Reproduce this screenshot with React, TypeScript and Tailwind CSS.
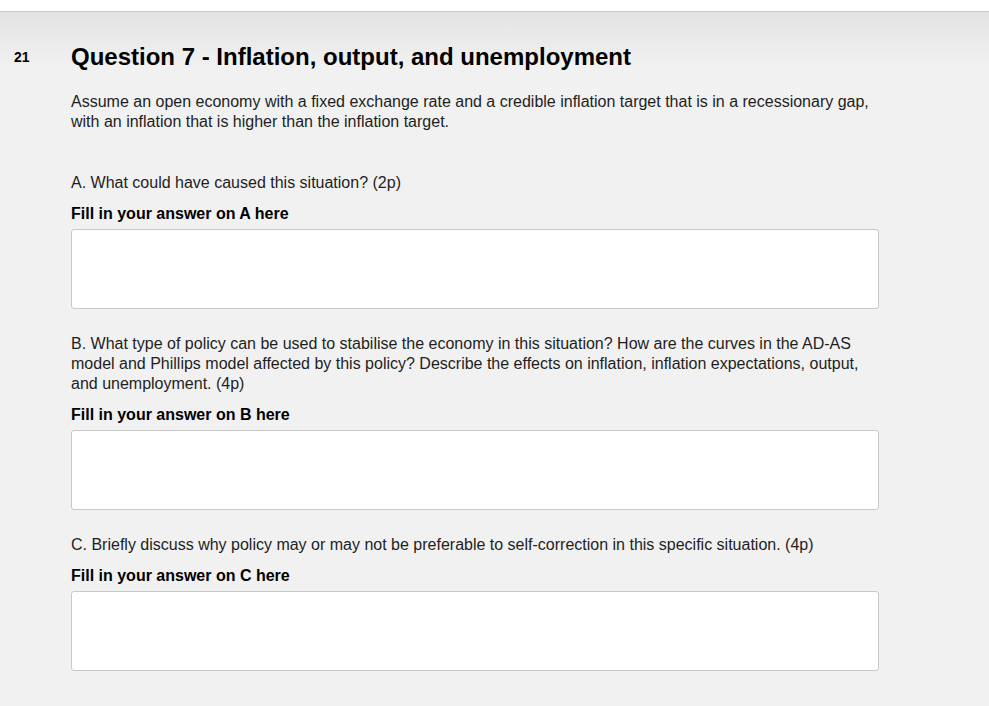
export default function App() {
  const parts = [
    {
      id: 'A',
      text: 'A. What could have caused this situation? (2p)',
    },
    {
      id: 'B',
      text: 'B. What type of policy can be used to stabilise the economy in this situation? How are the curves in the AD-AS model and Phillips model affected by this policy? Describe the effects on inflation, inflation expectations, output, and unemployment. (4p)',
    },
    {
      id: 'C',
      text: 'C. Briefly discuss why policy may or may not be preferable to self-correction in this specific situation. (4p)',
    },
  ];

  return (
    <div className="w-[989px] h-[706px] overflow-hidden bg-[#f1f1f1] font-['Liberation_Sans',Arial,sans-serif] text-[#1e1e1e]">
      <div className="h-[12px] bg-white border-b border-[#c8c8c8]" />
      <div className="bg-[linear-gradient(to_bottom,#e3e3e3,#f1f1f1_55px)] flex pt-[31px]">
        <div className="w-[71px] shrink-0 pl-[14px] pt-[6px] text-[14px] font-bold leading-[16px] text-black">21</div>
        <div className="w-[808px] pb-10">
          <h1 className="text-[24px] font-bold leading-[28px] text-black">Question 7 - Inflation, output, and unemployment</h1>
          <p className="mt-[21px] text-[16px] leading-[20px]">
            Assume an open economy with a fixed exchange rate and a credible inflation target that is in a recessionary gap, with an inflation that is higher than the inflation target.
          </p>
          <div className="mt-[41px] flex flex-col gap-[25px]">
            {parts.map(part => (
              <div key={part.id}>
                <p className="text-[16px] leading-[20px]">{part.text}</p>
                <div className="mt-[11px] text-[16px] font-bold leading-[20px] text-black">Fill in your answer on {part.id} here</div>
                <div className="mt-[5px] h-[80px] rounded-[3px] border border-[#c8c8c8] bg-white" />
              </div>
            ))}
          </div>
        </div>
      </div>
    </div>
  );
}
